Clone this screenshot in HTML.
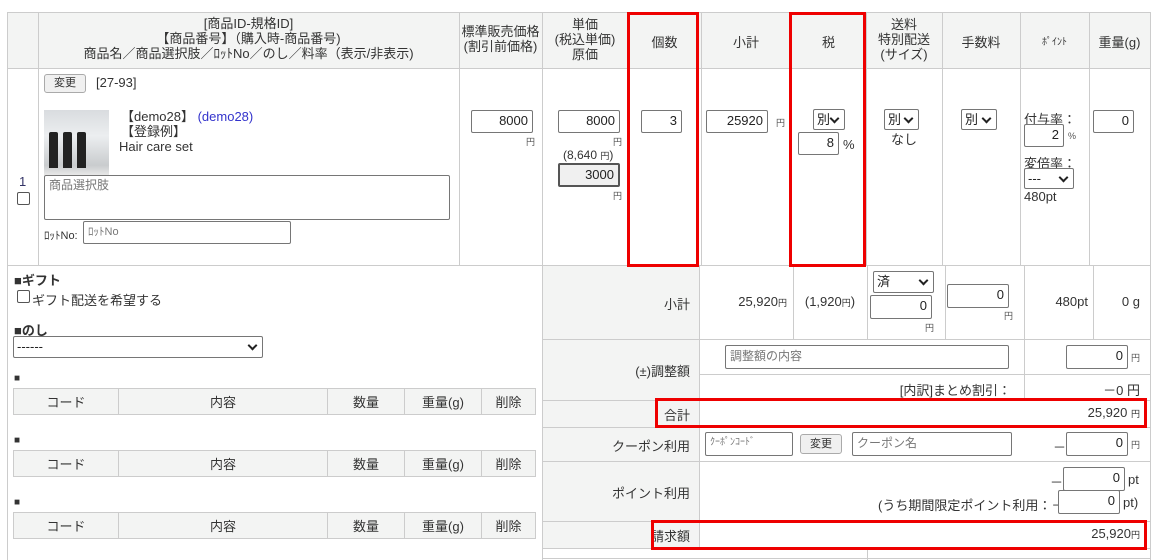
<!DOCTYPE html>
<html><head><meta charset="utf-8"><style>
*{box-sizing:border-box;margin:0;padding:0}
body{width:1156px;height:560px;overflow:hidden;background:#fff;font-family:"Liberation Sans","Noto Sans CJK JP",sans-serif;font-size:13px;color:#333;position:relative}
.a{position:absolute}
.hl{position:absolute;background:#ccc;height:1px}
.vl{position:absolute;background:#ccc;width:1px}
.bg{position:absolute;background:#f3f4f3}
.in{position:absolute;border:1px solid #767676;border-radius:2px;background:#fff;font-size:13px;text-align:right;padding:0 4px;line-height:20px;color:#222}
.ph{color:#777;text-align:left}
.sel{position:absolute;border:1px solid #767676;border-radius:2px;background:#fff;font-size:13px;line-height:19px;padding-left:3px;color:#222}
.sel:after{content:"";position:absolute;right:6px;top:5px;width:5px;height:5px;border-right:2px solid #222;border-bottom:2px solid #222;transform:rotate(45deg)}
.y{position:absolute;font-size:9px;color:#555}
.c{text-align:center}
.r{text-align:right}
.red{position:absolute;border:3px solid #e00}
.btn{position:absolute;border:1px solid #aaa;border-radius:3px;background:#f0f0f0;font-size:11px;text-align:center;line-height:17px}
.cb{position:absolute;width:13px;height:13px;border:1px solid #555;border-radius:2px;background:#fff}
td{font-size:13px}
</style></head><body>
<div class="bg" style="left:7px;top:12px;width:1143px;height:56px"></div>
<div class="bg" style="left:542px;top:265px;width:157px;height:283px"></div>
<div class="hl" style="left:7px;top:12px;width:1143px"></div>
<div class="hl" style="left:7px;top:68px;width:1143px"></div>
<div class="hl" style="left:7px;top:265px;width:1143px"></div>
<div class="hl" style="left:542px;top:339px;width:608px"></div>
<div class="hl" style="left:699px;top:374px;width:451px"></div>
<div class="hl" style="left:542px;top:400px;width:608px"></div>
<div class="hl" style="left:542px;top:427px;width:608px"></div>
<div class="hl" style="left:542px;top:461px;width:608px"></div>
<div class="hl" style="left:542px;top:521px;width:608px"></div>
<div class="hl" style="left:542px;top:548px;width:608px"></div>
<div class="hl" style="left:542px;top:558px;width:608px"></div>
<div class="vl" style="left:7px;top:12px;height:548px"></div>
<div class="vl" style="left:38px;top:12px;height:253px"></div>
<div class="vl" style="left:459px;top:12px;height:253px"></div>
<div class="vl" style="left:542px;top:12px;height:548px"></div>
<div class="vl" style="left:628px;top:12px;height:253px"></div>
<div class="vl" style="left:701px;top:12px;height:253px"></div>
<div class="vl" style="left:791px;top:12px;height:253px"></div>
<div class="vl" style="left:866px;top:12px;height:253px"></div>
<div class="vl" style="left:942px;top:12px;height:253px"></div>
<div class="vl" style="left:1020px;top:12px;height:253px"></div>
<div class="vl" style="left:1089px;top:12px;height:253px"></div>
<div class="vl" style="left:1150px;top:12px;height:548px"></div>
<div class="vl" style="left:699px;top:265px;height:283px"></div>
<div class="vl" style="left:793px;top:265px;height:74px"></div>
<div class="vl" style="left:867px;top:265px;height:74px"></div>
<div class="vl" style="left:945px;top:265px;height:74px"></div>
<div class="vl" style="left:1024px;top:265px;height:135px"></div>
<div class="vl" style="left:1093px;top:265px;height:74px"></div>
<div class="vl" style="left:867px;top:548px;height:12px"></div>
<div class="a c" style="left:38px;top:16px;width:421px;line-height:15px">[商品ID-規格ID]<br>【商品番号】（購入時-商品番号)<br>商品名／商品選択肢／ﾛｯﾄNo／のし／料率（表示/非表示)</div>
<div class="a c" style="left:459px;top:24px;width:83px;line-height:15px">標準販売価格<br>(割引前価格)</div>
<div class="a c" style="left:542px;top:17px;width:86px;line-height:15px">単価<br>(税込単価)<br>原価</div>
<div class="a c" style="left:628px;top:32px;width:73px">個数</div>
<div class="a c" style="left:701px;top:32px;width:90px">小計</div>
<div class="a c" style="left:791px;top:32px;width:75px">税</div>
<div class="a c" style="left:866px;top:17px;width:76px;line-height:15px">送料<br>特別配送<br>(サイズ)</div>
<div class="a c" style="left:942px;top:32px;width:78px">手数料</div>
<div class="a c" style="left:1020px;top:33px;width:69px;font-size:10px">ﾎﾟｲﾝﾄ</div>
<div class="a c" style="left:1089px;top:32px;width:61px;font-size:13px">重量(g)</div>
<div class="a" style="left:19px;top:174px;color:#336">1</div>
<div class="cb" style="left:17px;top:192px"></div>
<div class="btn" style="left:44px;top:74px;width:42px;height:19px">変更</div>
<div class="a" style="left:96px;top:75px;font-size:13px">[27-93]</div>
<div class="a" style="left:44px;top:110px;width:65px;height:65px;background:linear-gradient(#d9dcdf,#eceef0 40%,#c9ccce 85%,#e8e8e8)"></div>
<div class="a" style="left:49px;top:132px;width:9px;height:36px;background:#222;border-radius:2px 2px 0 0"></div>
<div class="a" style="left:63px;top:132px;width:9px;height:36px;background:#222;border-radius:2px 2px 0 0"></div>
<div class="a" style="left:77px;top:132px;width:9px;height:36px;background:#222;border-radius:2px 2px 0 0"></div>
<div class="a" style="left:121px;top:109px;font-size:13px;line-height:15px">【demo28】 <span style="color:#33c">(demo28)</span><br>【登録例】</div>
<div class="a" style="left:119px;top:139px;font-size:13px">Hair care set</div>
<div class="in ph" style="left:44px;top:175px;width:406px;height:45px;font-size:12px;line-height:18px">商品選択肢</div>
<div class="a" style="left:44px;top:227px;font-size:11px">ﾛｯﾄNo:</div>
<div class="in ph" style="left:83px;top:221px;width:208px;height:23px;font-size:11px">ﾛｯﾄNo</div>
<div class="in" style="left:471px;top:110px;width:62px;height:23px">8000</div>
<div class="y" style="left:526px;top:135px">円</div>
<div class="in" style="left:558px;top:110px;width:62px;height:23px">8000</div>
<div class="y" style="left:613px;top:135px">円</div>
<div class="a" style="left:563px;top:148px;font-size:12px">(8,640 <span style="font-size:9px">円</span>)</div>
<div class="in" style="left:558px;top:163px;width:62px;height:24px;background:#f0f0f0;border:2px solid #555">3000</div>
<div class="y" style="left:613px;top:189px">円</div>
<div class="in" style="left:641px;top:110px;width:41px;height:23px">3</div>
<div class="in" style="left:706px;top:110px;width:62px;height:23px">25920</div>
<div class="y" style="left:776px;top:116px">円</div>
<div class="sel" style="left:813px;top:109px;width:32px;height:21px">別</div>
<div class="in" style="left:798px;top:132px;width:41px;height:23px">8</div>
<div class="a" style="left:843px;top:137px">%</div>
<div class="sel" style="left:884px;top:109px;width:35px;height:21px">別</div>
<div class="a c" style="left:866px;top:129px;width:76px">なし</div>
<div class="sel" style="left:961px;top:109px;width:36px;height:21px">別</div>
<div class="a" style="left:1024px;top:109px">付与率：</div>
<div class="in" style="left:1024px;top:124px;width:40px;height:23px">2</div>
<div class="y" style="left:1068px;top:131px">%</div>
<div class="a" style="left:1024px;top:153px">変倍率：</div>
<div class="sel" style="left:1024px;top:168px;width:50px;height:21px">---</div>
<div class="a" style="left:1024px;top:189px">480pt</div>
<div class="in" style="left:1093px;top:110px;width:41px;height:23px">0</div>
<div class="a" style="left:14px;top:270px;font-weight:bold">■ギフト</div>
<div class="cb" style="left:17px;top:290px"></div>
<div class="a" style="left:32px;top:290px">ギフト配送を希望する</div>
<div class="a" style="left:14px;top:320px;font-weight:bold">■のし</div>
<div class="sel" style="left:13px;top:336px;width:250px;height:22px">------</div>
<div class="a" style="left:14px;top:373px;font-size:10px">■</div>
<div class="a" style="left:14px;top:435px;font-size:10px">■</div>
<div class="a" style="left:14px;top:497px;font-size:10px">■</div>
<div class="a r" style="left:542px;top:294px;width:148px">小計</div>
<div class="a r" style="left:699px;top:294px;width:88px">25,920<span style="font-size:9px">円</span></div>
<div class="a c" style="left:793px;top:294px;width:74px">(1,920<span style="font-size:9px">円</span>)</div>
<div class="sel" style="left:873px;top:271px;width:61px;height:22px">済</div>
<div class="in" style="left:870px;top:295px;width:62px;height:24px">0</div>
<div class="y" style="left:925px;top:321px">円</div>
<div class="in" style="left:947px;top:284px;width:62px;height:24px">0</div>
<div class="y" style="left:1004px;top:309px">円</div>
<div class="a r" style="left:1024px;top:294px;width:64px">480pt</div>
<div class="a r" style="left:1093px;top:294px;width:47px">0 g</div>
<div class="a r" style="left:542px;top:361px;width:148px">(±)調整額</div>
<div class="in ph" style="left:725px;top:345px;width:284px;height:24px;font-size:12px">調整額の内容</div>
<div class="in" style="left:1066px;top:345px;width:62px;height:24px">0</div>
<div class="y" style="left:1131px;top:351px">円</div>
<div class="a r" style="left:699px;top:380px;width:312px">[内訳]まとめ割引：</div>
<div class="a r" style="left:1024px;top:380px;width:116px">－0 円</div>
<div class="a r" style="left:542px;top:405px;width:148px">合計</div>
<div class="a r" style="left:699px;top:405px;width:441px">25,920 <span style="font-size:9px">円</span></div>
<div class="a r" style="left:542px;top:436px;width:148px">クーポン利用</div>
<div class="in ph" style="left:705px;top:432px;width:88px;height:24px;font-size:10px">ｸｰﾎﾟﾝｺｰﾄﾞ</div>
<div class="btn" style="left:800px;top:434px;width:42px;height:20px;line-height:18px">変更</div>
<div class="in ph" style="left:852px;top:432px;width:160px;height:24px;font-size:12px">クーポン名</div>
<div class="a" style="left:1053px;top:437px">－</div>
<div class="in" style="left:1066px;top:432px;width:62px;height:24px">0</div>
<div class="y" style="left:1131px;top:438px">円</div>
<div class="a r" style="left:542px;top:483px;width:148px">ポイント利用</div>
<div class="a" style="left:1050px;top:472px">－</div>
<div class="in" style="left:1063px;top:467px;width:62px;height:24px">0</div>
<div class="a" style="left:1128px;top:472px">pt</div>
<div class="a" style="left:878px;top:495px">(うち期間限定ポイント利用：－</div>
<div class="in" style="left:1058px;top:490px;width:62px;height:24px">0</div>
<div class="a" style="left:1123px;top:495px">pt)</div>
<div class="a r" style="left:542px;top:526px;width:148px">請求額</div>
<div class="a r" style="left:699px;top:526px;width:441px">25,920<span style="font-size:9px">円</span></div>
<div class="a" style="left:13px;top:388px;width:523px">
<table style="border-collapse:collapse;width:523px;background:#f3f4f3"><tr style="height:26px"><td class="c" style="border:1px solid #ccc;width:105px">コード</td><td class="c" style="border:1px solid #ccc;width:209px">内容</td><td class="c" style="border:1px solid #ccc;width:77px">数量</td><td class="c" style="border:1px solid #ccc;width:77px">重量(g)</td><td class="c" style="border:1px solid #ccc">削除</td></tr></table></div>
<div class="a" style="left:13px;top:450px;width:523px">
<table style="border-collapse:collapse;width:523px;background:#f3f4f3"><tr style="height:26px"><td class="c" style="border:1px solid #ccc;width:105px">コード</td><td class="c" style="border:1px solid #ccc;width:209px">内容</td><td class="c" style="border:1px solid #ccc;width:77px">数量</td><td class="c" style="border:1px solid #ccc;width:77px">重量(g)</td><td class="c" style="border:1px solid #ccc">削除</td></tr></table></div>
<div class="a" style="left:13px;top:512px;width:523px">
<table style="border-collapse:collapse;width:523px;background:#f3f4f3"><tr style="height:26px"><td class="c" style="border:1px solid #ccc;width:105px">コード</td><td class="c" style="border:1px solid #ccc;width:209px">内容</td><td class="c" style="border:1px solid #ccc;width:77px">数量</td><td class="c" style="border:1px solid #ccc;width:77px">重量(g)</td><td class="c" style="border:1px solid #ccc">削除</td></tr></table></div>
<div class="red" style="left:627px;top:12px;width:72px;height:255px"></div>
<div class="red" style="left:789px;top:12px;width:77px;height:255px"></div>
<div class="red" style="left:655px;top:398px;width:492px;height:30px"></div>
<div class="red" style="left:651px;top:520px;width:496px;height:30px"></div>
</body></html>
